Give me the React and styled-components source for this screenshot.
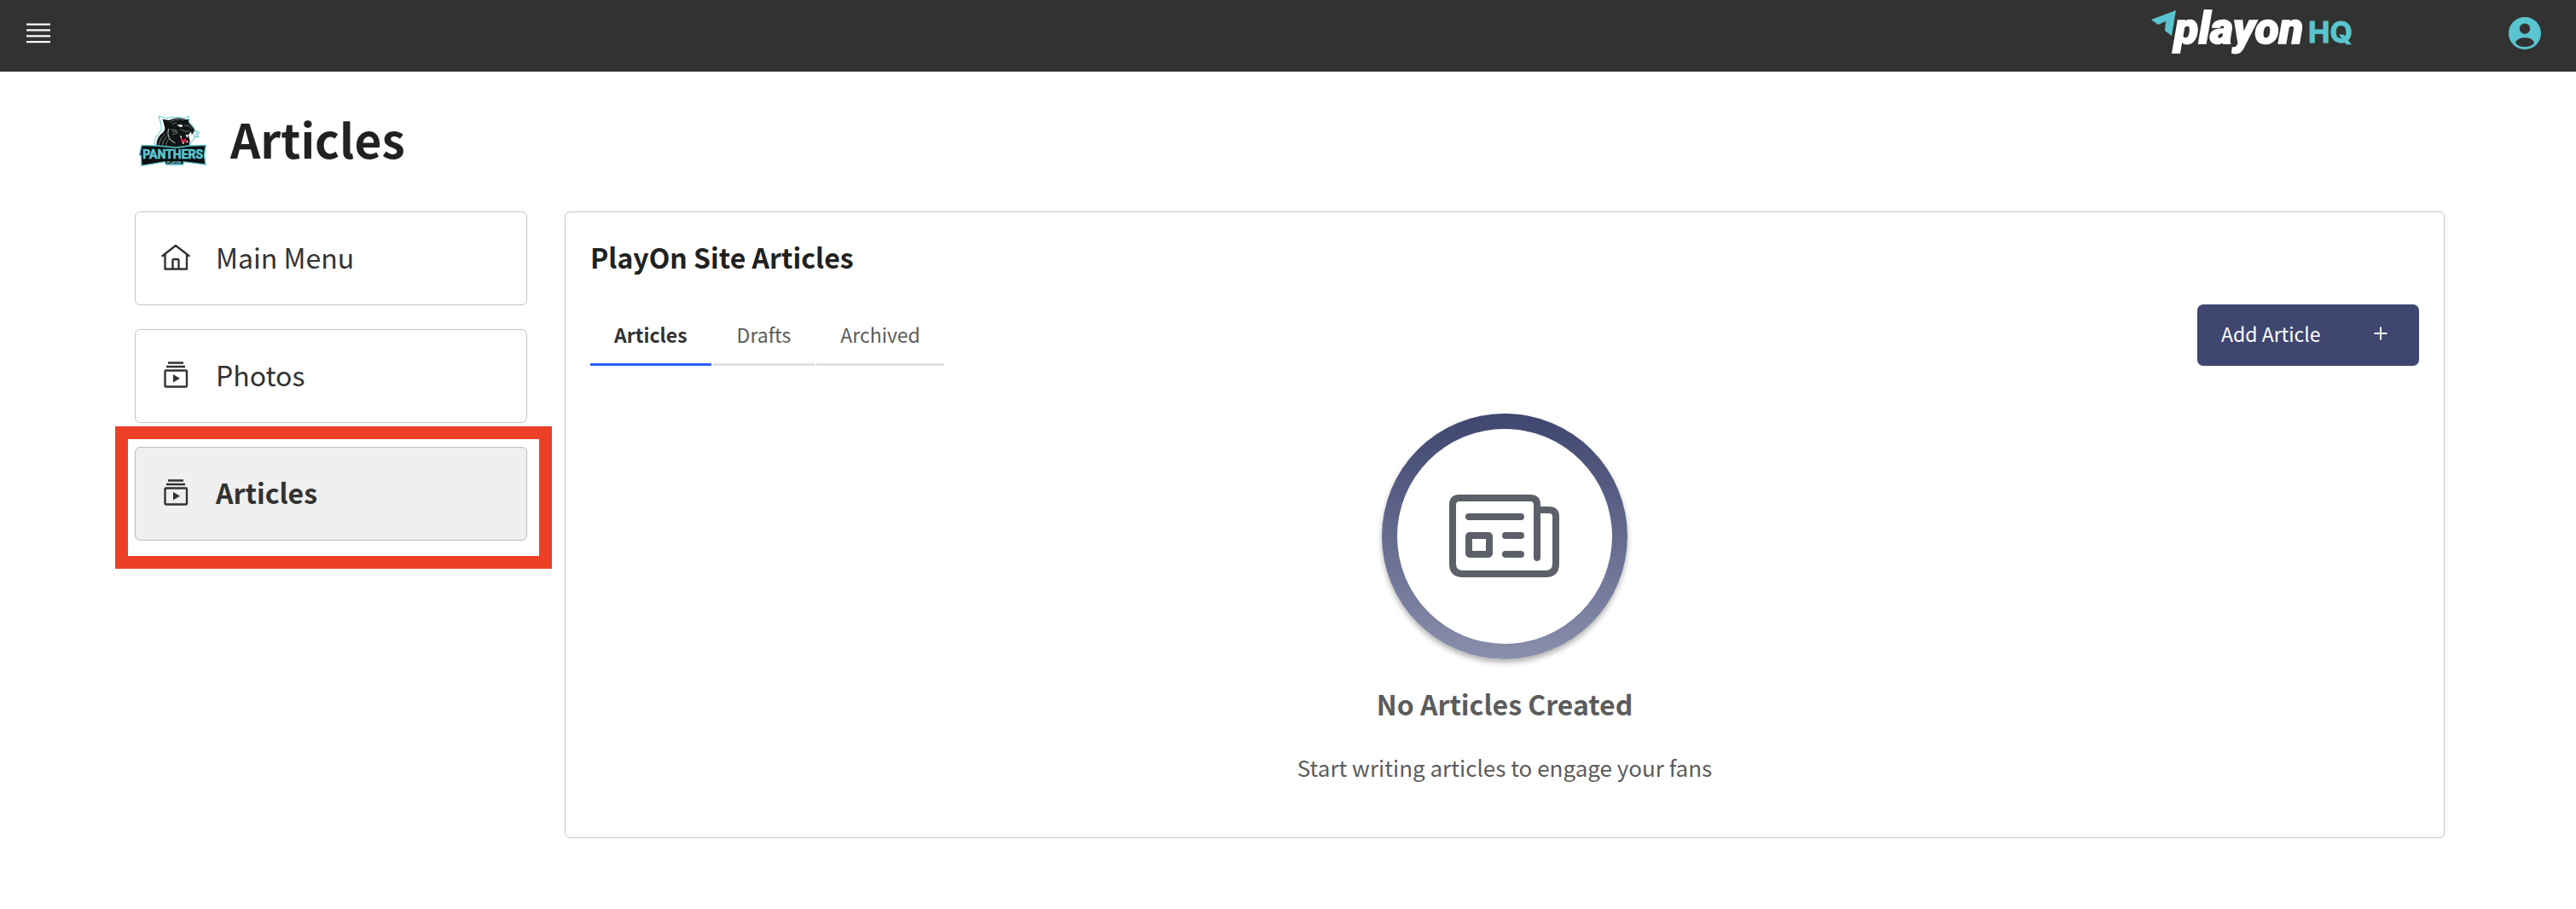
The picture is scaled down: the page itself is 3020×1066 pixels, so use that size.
import React, { useState } from "react";
import styled, { createGlobalStyle, css } from "styled-components";

const GlobalStyle = createGlobalStyle`
  * {
    box-sizing: border-box;
  }
  body {
    margin: 0;
    background: #fff;
    color: #212121;
    font-family: "Noto Sans CJK SC", "Noto Sans", sans-serif;
  }
  button {
    font-family: inherit;
    cursor: pointer;
  }
`;

const Header = styled.header`
  height: 84px;
  padding: 0 40px 0 31px;
  background: #323232;
  display: flex;
  align-items: flex-start;
`;

const MenuToggle = styled.button`
  padding: 0;
  margin-top: 27px;
  border: none;
  background: none;
  svg {
    display: block;
  }
`;

const BrandLink = styled.a`
  margin-left: auto;
  margin-right: 180px;
  svg {
    display: block;
  }
`;

const AccountButton = styled.button`
  margin-top: 19px;
  padding: 0;
  border: none;
  background: none;
  svg {
    display: block;
  }
`;

const Page = styled.main`
  padding: 42px 154px 82px 158px;
`;

const PageHeading = styled.div`
  display: flex;
  gap: 14px;
  margin-bottom: 50px;
  h1 {
    margin: 0;
    font-size: 55px;
    line-height: 72px;
    font-weight: 600;
  }
`;

const Columns = styled.div`
  display: grid;
  grid-template-columns: 460px 1fr;
  gap: 44px;
  align-items: start;
`;

const SideMenu = styled.ul`
  margin: 0;
  padding: 0;
  list-style: none;
  display: flex;
  flex-direction: column;
  gap: 28px;
  li {
    position: relative;
  }
`;

const MenuLink = styled.a`
  display: flex;
  gap: 30px;
  padding: 36px 30px 40px;
  border: 1px solid #c6c6c6;
  border-radius: 6px;
  color: #323232;
  font-size: 32px;
  line-height: 32px;
  text-decoration: none;
  ${props =>
    props.$active &&
    css`
      background: #efefef;
      border-color: #bdbdbd;
      font-weight: 600;
    `}
`;

const Highlight = styled.span`
  position: absolute;
  top: -24px;
  right: -29px;
  bottom: -33px;
  left: -23px;
  border: 15px solid #eb4026;
  pointer-events: none;
`;

const Panel = styled.section`
  padding: 36px 29px 62px;
  border: 1px solid #c6c6c6;
  border-radius: 6px;
  h2 {
    margin: 0 0 40px;
    font-size: 32px;
    line-height: 32px;
    font-weight: 600;
  }
`;

const Toolbar = styled.div`
  display: flex;
  justify-content: space-between;
`;

const Tabs = styled.div`
  display: flex;
  gap: 2px;
`;

const Tab = styled.button`
  height: 72px;
  padding: 0 28px;
  border: none;
  border-bottom: 3px solid #e0e0e0;
  background: none;
  color: #5c5c5c;
  font-size: 23px;
  line-height: 32px;
  ${props =>
    props.$active &&
    css`
      border-color: #2d60ff;
      color: #323232;
      font-weight: 600;
    `}
`;

const AddButton = styled.button`
  width: 260px;
  height: 72px;
  padding: 0 36px 4px 28px;
  border: none;
  border-radius: 7px;
  background: #3f466f;
  color: #fff;
  font-size: 23px;
  line-height: 32px;
  display: flex;
  align-items: center;
  justify-content: space-between;
`;

const EmptyState = styled.div`
  margin-top: 56px;
  display: flex;
  flex-direction: column;
  align-items: center;
  color: #5c5c5c;
  text-align: center;
  h3 {
    margin: 32px 0 35px;
    font-size: 32px;
    line-height: 40px;
    font-weight: 600;
  }
  p {
    margin: 0;
    font-size: 26px;
    line-height: 40px;
  }
`;

const Ring = styled.div`
  width: 288px;
  height: 288px;
  padding: 18px;
  border-radius: 50%;
  background: linear-gradient(#3f466f, #8a8fac);
  box-shadow: 0 4px 6px rgba(0, 0, 0, 0.3);
`;

const RingInner = styled.div`
  height: 100%;
  border-radius: 50%;
  background: #fff;
  display: flex;
  align-items: center;
  justify-content: center;
`;

const HamburgerIcon = () => (
  <svg width="28" height="24" viewBox="0 0 28 24" fill="#fff">
    <rect y="0.5" width="28" height="2.2" />
    <rect y="7.3" width="28" height="2.2" />
    <rect y="14.2" width="28" height="2.2" />
    <rect y="21" width="28" height="2.2" />
  </svg>
);

const PlayOnLogo = () => (
  <svg width="238" height="72" viewBox="0 0 238 72" role="img">
    <path d="M0 23L29 12L24 42L16 36L17 25L8 29Z" fill="#58c5d0" />
    <text
      x="27"
      y="51"
      fill="#fff"
      stroke="#fff"
      strokeWidth="1.5"
      fontFamily="Roboto, sans-serif"
      fontSize="52"
      fontWeight="900"
      fontStyle="italic"
    >
      playon
    </text>
    <text
      x="184"
      y="50"
      fill="#58c5d0"
      stroke="#58c5d0"
      fontFamily="Inter, sans-serif"
      fontSize="34"
      fontWeight="700"
    >
      HQ
    </text>
  </svg>
);

const AccountIcon = () => (
  <svg width="40" height="40" viewBox="0 0 40 40">
    <circle cx="20" cy="20" r="19" fill="#58c5d0" />
    <circle cx="20" cy="14.7" r="6.2" fill="#323232" />
    <path
      d="M9 31.5C10 27 14.5 25.3 20 25.3S30 27 31 31.5C28.500 34.500 24.500 36 20 36S11.500 34.500 9 31.500Z"
      fill="#323232"
    />
  </svg>
);

const PanthersLogo = () => (
  <svg width="98" height="72" viewBox="0 0 294 216" role="img">
    <g transform="translate(16 27)">
      <path
        d="M56 112C52 88 58 74 70 62C80 50 78 42 76 32L68 3L94 11C116 6 140 6 158 12L173 4L176 24L190 40L196 56L212 62L200 66L210 78L196 74L190 86L180 100L176 116L140 124Z"
        fill="#fff"
        stroke="#58c5d0"
        strokeWidth="3"
        strokeLinejoin="round"
      />
      <path
        d="M60 118C60 92 64 76 78 66C90 56 92 48 88 38L82 14L104 18C124 8 146 8 162 16L172 14L174 26L186 40L194 52L190 64L184 68L182 58L172 70L178 90L174 114L150 126Z"
        fill="#111516"
      />
      <path
        d="M68 110C70 90 78 76 92 66M82 110C82 94 88 82 98 74M94 108C96 96 98 90 104 84M108 24C124 14 142 12 156 18M116 32L132 25M158 36L174 38L184 48M112 50L132 54M114 58L134 58M116 68L136 62M144 50L164 58L176 56"
        fill="none"
        stroke="#6d7476"
        strokeWidth="3"
      />
      <path d="M104 48C98 62 100 76 112 90L126 98" fill="none" stroke="#d9dddd" strokeWidth="3" />
      <path d="M132 34L150 33L153 41L142 42Z" fill="#e7e7df" />
      <path d="M140 72L154 82L170 72L172 94L158 104L144 98Z" fill="#090b0c" />
      <path d="M146 78L155 86L163 80L166 94L155 99L145 91Z" fill="#c6203c" />
      <path
        d="M142 72L149 74L148 84ZM163 70L172 68L168 82ZM150 100L154 92L158 101ZM165 99L168 88L172 94Z"
        fill="#fff"
      />
      <path d="M188 60L204 56M190 66L210 72M188 70L204 82" stroke="#58c5d0" strokeWidth="2" />
      <path
        d="M8 106L64 108L130 114L176 108L234 106L228 140L233 174L156 164L154 174H94L90 164L8 178L6 142L1 140Z"
        fill="#0c0f10"
        stroke="#58c5d0"
        strokeWidth="4"
      />
      <text
        x="118"
        y="154"
        fill="#58c5d0"
        stroke="#58c5d0"
        strokeWidth="2"
        fontFamily="Roboto, sans-serif"
        fontSize="42"
        fontWeight="700"
        textAnchor="middle"
      >
        PANTHERS
      </text>
      <text
        x="122"
        y="170"
        fill="#8ad5dc"
        fontFamily="Roboto, sans-serif"
        fontSize="13"
        fontWeight="700"
        textAnchor="middle"
      >
        PLAYON
      </text>
    </g>
  </svg>
);

const HomeIcon = () => (
  <svg
    width="34"
    height="32"
    viewBox="0 0 34 32"
    fill="none"
    stroke="#323232"
    strokeWidth="2.4"
    strokeLinejoin="round"
    strokeLinecap="round"
  >
    <path d="M1.500 15L17 3L32.500 15M4.500 13V30.500H30V13" />
    <path d="M13.500 30V20.500Q13.500 19 15 19H19Q20.500 19 20.500 20.500V30" />
  </svg>
);

const CollectionIcon = () => (
  <svg width="34" height="32" viewBox="0 0 34 32" fill="none" stroke="#323232" strokeWidth="2.4">
    <path d="M8 2.500H26M6 7H28" />
    <rect x="4.500" y="11.500" width="25.500" height="19" rx="1" />
    <path d="M14 16V25.500L22 20.800Z" fill="#323232" stroke="none" />
  </svg>
);

const PlusIcon = () => (
  <svg width="18" height="18" viewBox="0 0 18 18" stroke="#fff" strokeWidth="2">
    <path d="M9 1.500V16.500M1.500 9H16.500" />
  </svg>
);

const NewspaperIcon = () => (
  <svg
    width="130"
    height="98"
    viewBox="0 0 130 98"
    fill="none"
    stroke="#5d6069"
    strokeWidth="8"
    strokeLinecap="round"
    strokeLinejoin="round"
  >
    <path d="M103 74V12Q103 4 95 4H12Q4 4 4 12V81Q4 93 16 93H113Q125 93 125 81V26Q125 18 117 18H104" />
    <path d="M23 26H84M66 48H84M66 70H84" />
    <rect x="23" y="48" width="24" height="22" rx="1" />
  </svg>
);

const menuItems = [
  { label: "Main Menu", Icon: HomeIcon },
  { label: "Photos", Icon: CollectionIcon },
  { label: "Articles", Icon: CollectionIcon, active: true }
];

const tabs = ["Articles", "Drafts", "Archived"];

const App = () => {
  const [tab, setTab] = useState("Articles");
  return (
    <>
      <GlobalStyle />
      <Header>
        <MenuToggle aria-label="Menu">
          <HamburgerIcon />
        </MenuToggle>
        <BrandLink href="#">
          <PlayOnLogo />
        </BrandLink>
        <AccountButton aria-label="Account">
          <AccountIcon />
        </AccountButton>
      </Header>
      <Page>
        <PageHeading>
          <PanthersLogo />
          <h1>Articles</h1>
        </PageHeading>
        <Columns>
          <nav>
            <SideMenu>
              {menuItems.map(({ label, Icon, active }) => (
                <li key={label}>
                  <MenuLink href="#" $active={active}>
                    <Icon />
                    {label}
                  </MenuLink>
                  {active && <Highlight />}
                </li>
              ))}
            </SideMenu>
          </nav>
          <Panel>
            <h2>PlayOn Site Articles</h2>
            <Toolbar>
              <Tabs role="tablist">
                {tabs.map(name => (
                  <Tab
                    key={name}
                    role="tab"
                    aria-selected={tab === name}
                    $active={tab === name}
                    onClick={() => setTab(name)}
                  >
                    {name}
                  </Tab>
                ))}
              </Tabs>
              <AddButton>
                Add Article
                <PlusIcon />
              </AddButton>
            </Toolbar>
            <EmptyState>
              <Ring>
                <RingInner>
                  <NewspaperIcon />
                </RingInner>
              </Ring>
              <h3>No Articles Created</h3>
              <p>Start writing articles to engage your fans</p>
            </EmptyState>
          </Panel>
        </Columns>
      </Page>
    </>
  );
};

export default App;
